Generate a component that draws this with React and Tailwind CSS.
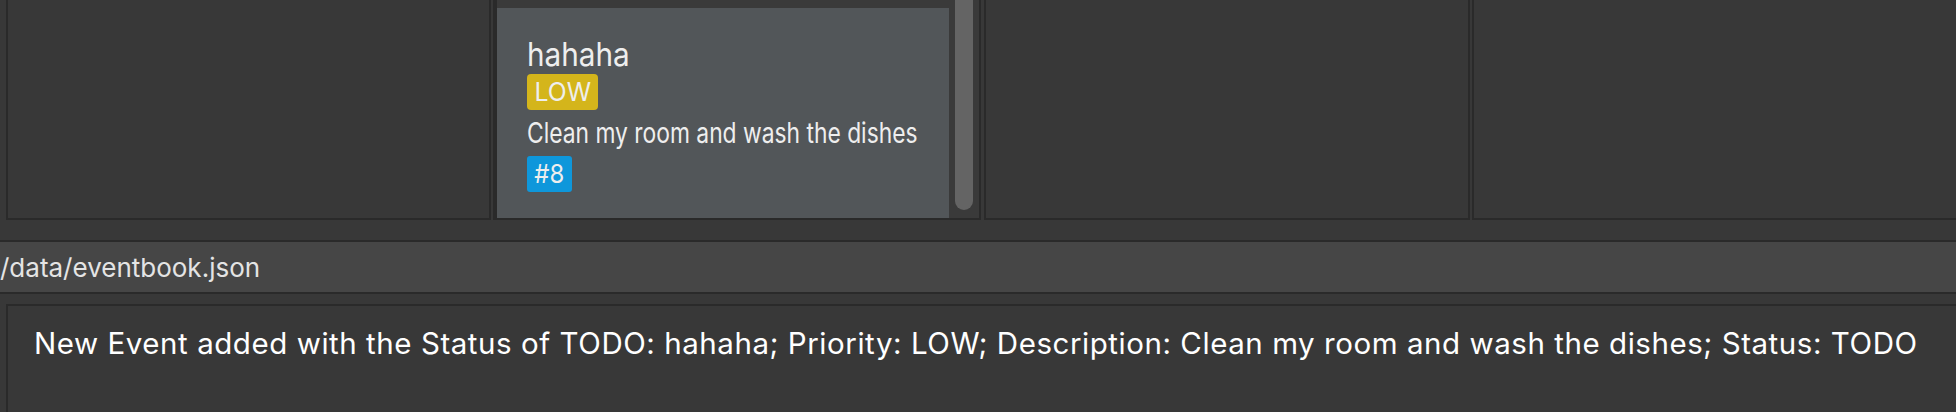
import React from 'react';

const font = "font-['Inter','Roboto','Liberation_Sans',sans-serif]";

function Panel({ className = '', children }) {
  return (
    <div className={`h-full shrink-0 border-x-2 border-b-2 border-[#2a2a2a] ${className}`}>
      {children}
    </div>
  );
}

function EventCard() {
  return (
    <div className="mt-[8px] h-[210px] w-[452px] bg-[#525659] pl-[30px] pt-[27px] text-[#eeeeee]">
      <div className="h-[38px] text-[33px] leading-[38px]">
        <span className="inline-block origin-left scale-x-[0.9]">hahaha</span>
      </div>
      <div className="mt-[1px] flex h-[36px] w-[71px] items-center justify-center rounded-[4px] bg-[#d4b51b] text-[26px] leading-[36px]">
        <span className="inline-block scale-x-[0.95]">LOW</span>
      </div>
      <div className="mt-[7px] h-[32px] text-[28px] leading-[32px]">
        <span className="inline-block origin-left scale-x-[0.815] whitespace-nowrap">Clean my room and wash the dishes</span>
      </div>
      <div className="mt-[7px] flex h-[36px] w-[45px] items-center justify-center rounded-[3px] bg-[#0e97db] text-[26px] leading-[36px]">
        <span className="inline-block scale-x-[0.92]">#8</span>
      </div>
    </div>
  );
}

export default function App() {
  return (
    <div className={`flex h-[412px] w-[1956px] flex-col overflow-hidden bg-[#383838] ${font}`}>
      {/* Event columns */}
      <div className="flex h-[220px] shrink-0 pl-[6px]">
        <Panel className="w-[485px]" />
        <Panel className="ml-[2px] flex w-[488px] bg-[#2a2a2a]">
          <div className="ml-[2px] flex-1 bg-[#3a3a3a]">
            <EventCard />
          </div>
          <div className="w-[30px] bg-[#3a3a3a] px-[6px]">
            <div className="h-[210px] rounded-b-[10px] bg-[#646464]" />
          </div>
        </Panel>
        <Panel className="ml-[3px] w-[486px]" />
        <Panel className="ml-[2px] w-[486px]" />
      </div>

      {/* Status bar */}
      <div className="mt-[20px] h-[54px] shrink-0 border-y-2 border-[#2a2a2a] bg-[#464646] pt-[2px] text-[26px] leading-[48px] whitespace-nowrap text-[#e4e4e4]">
        /data/eventbook.json
      </div>

      {/* Result display */}
      <div className="mt-[10px] ml-[6px] flex-1 border-l-2 border-t-2 border-[#2a2a2a] pl-[26px] pt-[21px] text-[29.5px] leading-[32px] tracking-[0.55px] whitespace-nowrap text-white">
        New Event added with the Status of TODO: hahaha; Priority: LOW; Description: Clean my room and wash the dishes; Status: TODO
      </div>
    </div>
  );
}
